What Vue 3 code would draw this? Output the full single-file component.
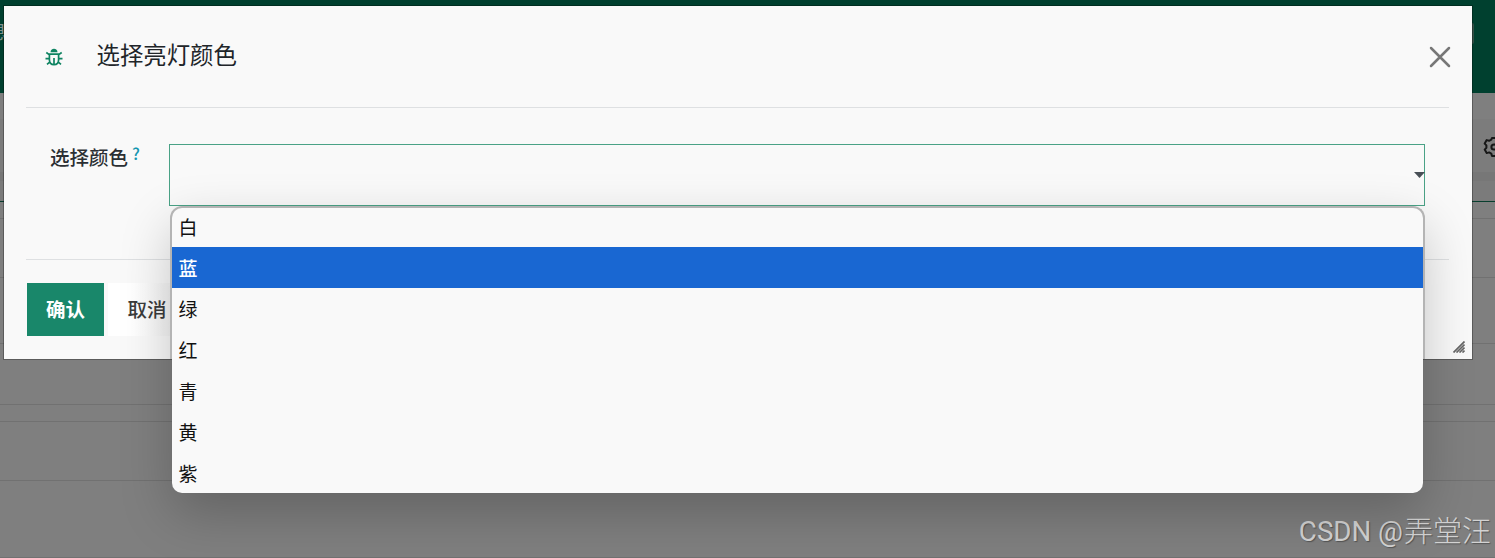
<script setup>
const options = ['白', '蓝', '绿', '红', '青', '黄', '紫']
const selected = '蓝'
const rows = [17, 59, 66, 61, 17, 59, 77]
</script>

<template>
  <div class="page">
    <header class="topbar">
      <span class="topbar-text">息</span>
      <span class="topbar-edge"></span>
    </header>
    <div class="spacer"></div>
    <div class="toolbar">
      <svg class="gear" width="22" height="22" viewBox="0 0 22 22" fill="none" stroke="#171717" stroke-width="2" stroke-linejoin="round">
        <path d="M9 2h4l.7 2.400 2.200 1.200 2.400-.7 2 3.500-1.700 1.800v2.400l1.700 1.800-2 3.500-2.400-.7-2.200 1.200L13 20H9l-.7-2.400-2.200-1.200-2.400.7-2-3.500 1.700-1.800V9.400L1.700 7.600l2-3.500 2.400.7 2.200-1.200Z" />
        <circle cx="11" cy="11" r="2.600" />
      </svg>
    </div>
    <div class="table-head"></div>
    <div v-for="(h, i) in rows" :key="i" class="row" :style="{ height: h + 'px' }"></div>

    <section class="dialog">
      <header class="dialog-head">
        <svg class="bug" width="18" height="18" viewBox="0 0 18 18" fill="none" stroke="#0f8462" stroke-width="1.700">
          <path d="M5.500 4.300C5.500 2.100 7 .7 9 .7s3.500 1.400 3.500 3.600Z" fill="#0f8462" stroke="none" />
          <path d="M4.400 6.200h9.200v5.500c0 3-1.900 4.900-4.600 4.900s-4.600-1.900-4.600-4.900ZM1.300 4.500l2.300 1.700h10.800l2.300-1.700M.500 10.600h3.900M13.600 10.600h3.900M5 13.800l-3 2.500M13 13.800l3 2.500" />
          <path d="M9 10v6" />
        </svg>
        <h1>选择亮灯颜色</h1>
        <svg class="close" width="22" height="22" viewBox="0 0 22 22" stroke="#777" stroke-width="2.500" stroke-linecap="round">
          <path d="M2 2l18 18M20 2L2 20" />
        </svg>
      </header>
      <div class="dialog-body">
        <label>选择颜色<sup>?</sup></label>
        <div class="select">
          <svg class="caret" width="11" height="6" viewBox="0 0 11 6"><path d="M0 0h11L5.500 6Z" fill="#495057" /></svg>
          <ul class="menu">
            <li v-for="o in options" :key="o" :class="{ active: o === selected }">{{ o }}</li>
          </ul>
        </div>
      </div>
      <footer class="dialog-foot">
        <button class="primary">确认</button>
        <button class="secondary">取消</button>
      </footer>
      <svg class="grip" width="12" height="12" viewBox="0 0 12 12" stroke="#666" stroke-width="1.700">
        <path d="M.500 11.500l11-11M3.500 11.500l8-8M6.500 11.500l5-5M9.500 11.500l2-2" />
      </svg>
    </section>
    <div class="watermark"><span class="latin">CSDN @</span><span>弄堂汪</span></div>
  </div>
</template>

<style>
body { margin: 0; overflow: hidden; }
</style>

<style scoped>
* { box-sizing: border-box; }
.page {
  position: relative;
  width: 1495px;
  height: 558px;
  overflow: hidden;
  background: #7f7f7f;
  font-family: "Noto Sans CJK SC", sans-serif;
}
.topbar { position: relative; height: 93px; background: #00402f; }
.topbar-text { position: absolute; left: -12px; top: 17px; font-size: 19px; line-height: 28px; color: #80908b; }
.topbar-edge { position: absolute; left: 1468px; top: 23px; width: 6px; height: 21px; border-radius: 2px; background: #334f46; }
.spacer { height: 26px; }
.toolbar { height: 53px; background: #7c7c7c; position: relative; }
.gear { position: absolute; left: 1483px; top: 17px; }
.table-head { height: 30px; border-bottom: 1px solid #083e2e; background: linear-gradient(#777 0 9px, #7b7b7b 9px); }
.row { border-bottom: 1px solid #717171; }
.dialog {
  position: absolute;
  left: 4px;
  top: 6px;
  width: 1468px;
  height: 353px;
  padding: 0 23px 0 22px;
  background: #f9f9f9;
  box-shadow: 0 0 0 1px rgba(0, 0, 0, .28);
}
.dialog-head { display: flex; height: 102px; border-bottom: 1px solid #dee0e2; }
.bug { flex: none; margin: 42px 0 0 19px; }
h1 { margin: 30px 0 0 33.500px; font-size: 23.400px; line-height: 36px; font-weight: 400; color: #212529; }
.close { margin: 40px -2px 0 auto; }
.dialog-body { display: flex; height: 152px; padding: 36px 24px 0; border-bottom: 1px solid #dee0e2; }
label { width: 119px; margin-top: -1px; font-size: 19.500px; line-height: 28px; font-weight: 500; color: #2b2f33; white-space: nowrap; }
sup { margin-left: 4px; font-size: 16px; font-weight: 500; line-height: 0; vertical-align: 5px; color: #1596b0; }
.select { position: relative; flex: none; width: 1256px; height: 62px; border: 1px solid #4aa286; }
.caret { position: absolute; right: -1px; top: 27px; }
.menu {
  position: absolute;
  z-index: 1;
  left: 2px;
  top: 61px;
  width: 1251px;
  height: 287px;
  margin: 0;
  padding: 0;
  list-style: none;
  background: #f9f9f9;
  border-radius: 10px;
  box-shadow: 0 20px 52px rgba(0, 0, 0, .22);
}
.menu::before {
  content: "";
  position: absolute;
  box-sizing: border-box;
  left: -2px;
  top: 0;
  width: 1255px;
  height: 153px;
  border: 2px solid #b4b4b4;
  border-bottom: 0;
  border-radius: 12px 12px 0 0;
}
.menu li { height: 41px; padding-left: 6.500px; font-size: 19px; line-height: 41px; color: #111; }
.menu li.active { position: relative; background: #1967d2; color: #fff; font-weight: 500; }
.dialog-foot { display: flex; gap: 4px; padding: 23px 0 0 1px; }
button { height: 53px; padding: 0 0 2px; border: 0; font: 500 19.500px/51px "Noto Sans CJK SC", sans-serif; }
.primary { width: 77px; background: #19876a; color: #fff; font-weight: 700; }
.secondary { width: 78px; background: linear-gradient(90deg, #fff 30%, #eee); color: #3b3b3b; font-weight: 500; }
.grip { position: absolute; right: 7px; bottom: 6px; }
.watermark {
  position: absolute;
  display: flex;
  right: 4px;
  top: 507px;
  font-size: 29px;
  line-height: 44px;
  font-weight: 300;
  color: #d3d3d3;
  white-space: nowrap;
  text-shadow: 1px 1px 1px #555;
}
.latin { margin: 3px 1px 0 0; font-family: Roboto, sans-serif; font-size: 27.700px; font-weight: 400; }
</style>
